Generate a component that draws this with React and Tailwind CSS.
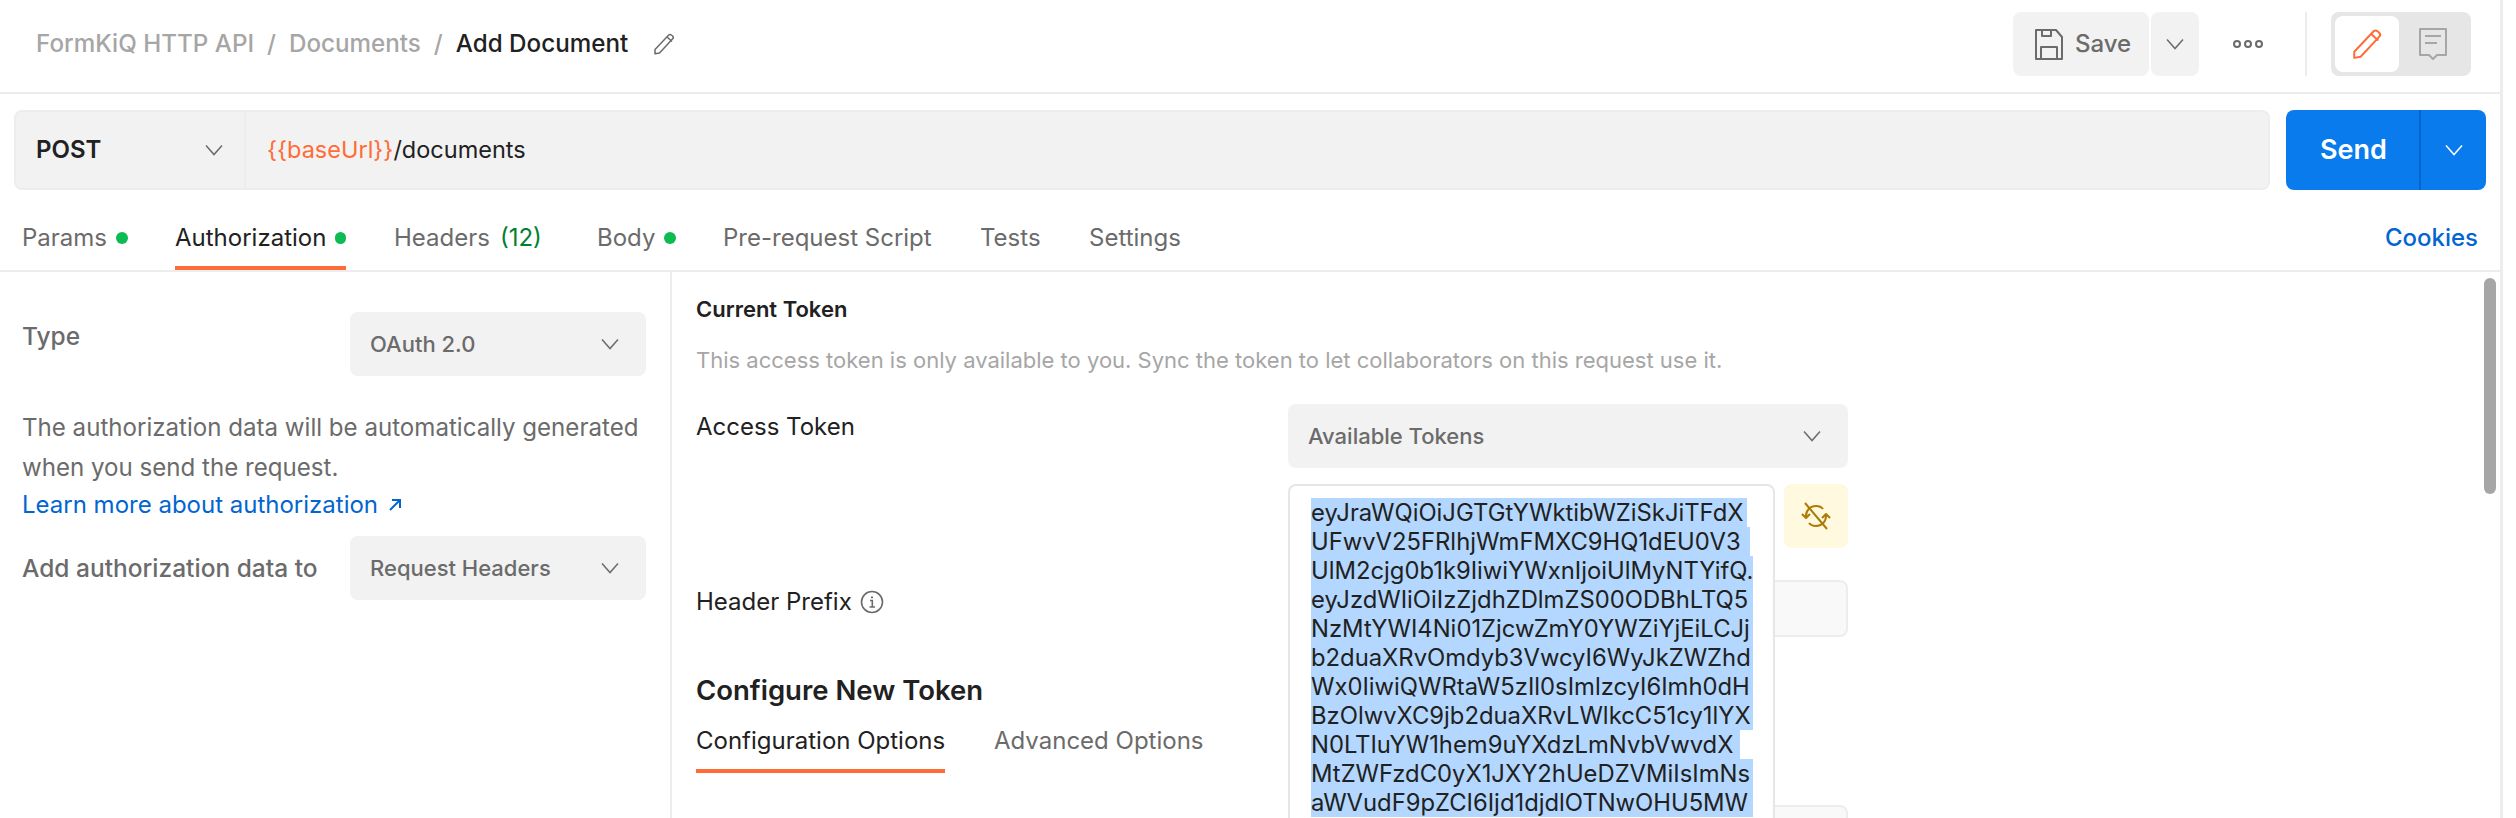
import React from 'react';

const tokenLines = [
  ['eyJraWQiOiJGTGtYWktibWZiSkJiTFdX', 'w-[436px]'],
  ['UFwvV25FRlhjWmFMXC9HQ1dEU0V3', 'w-[439px]'],
  ['UlM2cjg0b1k9IiwiYWxnIjoiUlMyNTYifQ.', 'w-[442px]'],
  ['eyJzdWIiOiIzZjdhZDlmZS00ODBhLTQ5', 'w-[442px]'],
  ['NzMtYWI4Ni01ZjcwZmY0YWZiYjEiLCJj', 'w-[442px]'],
  ['b2duaXRvOmdyb3VwcyI6WyJkZWZhd', 'w-[442px]'],
  ['Wx0IiwiQWRtaW5zIl0sImlzcyI6Imh0dH', 'w-[442px]'],
  ['BzOlwvXC9jb2duaXRvLWlkcC51cy1lYX', 'w-[442px]'],
  ['N0LTIuYW1hem9uYXdzLmNvbVwvdX', 'w-[429px]'],
  ['MtZWFzdC0yX1JXY2hUeDZVMiIsImNs', 'w-[442px]'],
  ['aWVudF9pZCI6Ijd1djdlOTNwOHU5MW', 'w-[442px]'],
];

const Chevron = ({ className = 'text-[#6b6b6b]' }) => (
  <svg width="20" height="20" viewBox="0 0 20 20" fill="none" stroke="currentColor" strokeWidth="1.5" className={className}>
    <path d="M2 5.500l8 9 8-9" />
  </svg>
);

const Pencil = ({ size = 24, color = '#6b6b6b', sw = 1.5 }) => (
  <svg width={size} height={size} viewBox="0 0 24 24" fill="none" stroke={color} strokeWidth={sw} strokeLinejoin="round">
    <path d="M3 17.5L16.5 3.2c.8-.8 2-.9 2.9-.2l1.2 1c.8.8.9 2 .1 2.8L7.5 21 3 21.8z" />
    <path d="M15 5l5 4.5" />
  </svg>
);

const SaveIcon = () => (
  <svg width="28" height="32" viewBox="0 0 28 32" fill="none" stroke="#6b6b6b" strokeWidth="2" strokeLinejoin="round">
    <path d="M1 2h20l6 7v22H1z" />
    <path d="M7 2v6h9V2M6 31V19h16v12" />
  </svg>
);

const CommentIcon = () => (
  <svg width="30" height="34" viewBox="0 0 30 34" fill="none" stroke="#a6a6a6" strokeWidth="2" strokeLinejoin="round">
    <path d="M2 2h26v26H19l-4 4-4-4H2z" />
    <path d="M7 9h16M7 16h12" />
  </svg>
);

const SyncOff = () => (
  <svg width="32" height="32" viewBox="0 0 32 32" fill="none" stroke="#ad7a03" strokeWidth="2" strokeLinejoin="round">
    <path d="M5 3l22 26" />
    <path d="M6 16c0-6 4.500-10 10-10 3 0 5.500 1 7 3" />
    <path d="M26 16c0 6-4.500 10-10 10-3 0-5.500-1-7-3" />
    <path d="M2 14l4 4 4-4M22 18l4-4 4 4" />
  </svg>
);

const InfoIcon = () => (
  <svg width="24" height="24" viewBox="0 0 24 24" fill="none" stroke="#6b6b6b" strokeWidth="1.6">
    <circle cx="12" cy="12" r="10.500" />
    <path d="M10 10.500h2.300V17M9.500 17h5.500" />
    <path d="M12 6.500v1.800" strokeWidth="2" />
  </svg>
);

const Dot = () => <span className="ml-[9px] h-[12px] w-[12px] rounded-full bg-[#0cbb52]" />;

const Select = ({ label, className }) => (
  <div className={`flex h-[64px] items-center justify-between rounded-[8px] bg-[#f2f2f2] pl-[20px] pr-[26px] text-[22px] font-medium text-[#6b6b6b] ${className}`}>
    {label}
    <Chevron />
  </div>
);

const Tab = ({ active, className = '', children }) => (
  <div className={`flex h-full items-center whitespace-nowrap border-b-4 text-[24px] ${active ? 'border-[#ff6c37] text-[#212121]' : 'border-transparent text-[#6b6b6b]'} ${className}`}>
    {children}
  </div>
);

export default function App() {
  return (
    <div className="flex h-[818px] w-[2516px] overflow-hidden bg-white font-['Inter',sans-serif] text-[#212121]">
      <div className="flex w-[2503px] shrink-0 flex-col border-r-[3px] border-[#ededed]">
        {/* title bar */}
        <div className="flex h-[94px] shrink-0 items-center justify-between border-b-2 border-[#ededed] pb-[4px] pl-[36px] pr-[29px]">
          <div className="flex items-center text-[24.2px] font-medium text-[#a6a6a6]">
            <span>FormKiQ HTTP API</span>
            <span className="mx-[13px]">/</span>
            <span>Documents</span>
            <span className="mx-[13px]">/</span>
            <span className="text-[#212121]">Add Document</span>
            <span className="ml-[24px] flex"><Pencil /></span>
          </div>
          <div className="flex h-[64px] items-center">
            <div className="flex h-full w-[136px] items-center gap-[12px] rounded-[8px] bg-[#f2f2f2] pl-[22px] text-[24px] font-medium text-[#6b6b6b]">
              <SaveIcon />
              Save
            </div>
            <div className="ml-[2px] flex h-full w-[48px] items-center justify-center rounded-[8px] bg-[#f2f2f2]">
              <Chevron />
            </div>
            <div className="ml-[34px] flex gap-[3px]">
              <span className="h-[8px] w-[8px] rounded-full border-2 border-[#6b6b6b]" />
              <span className="h-[8px] w-[8px] rounded-full border-2 border-[#6b6b6b]" />
              <span className="h-[8px] w-[8px] rounded-full border-2 border-[#6b6b6b]" />
            </div>
            <div className="ml-[42px] h-full w-[2px] bg-[#ededed]" />
            <div className="ml-[24px] flex h-full w-[140px] items-center rounded-[8px] bg-[#e6e6e6] p-[4px]">
              <div className="flex h-[56px] w-[64px] items-center justify-center rounded-[8px] bg-white">
                <Pencil size={34} color="#ff6c37" sw={1.4} />
              </div>
              <div className="flex flex-1 items-center justify-center">
                <CommentIcon />
              </div>
            </div>
          </div>
        </div>

        {/* url bar */}
        <div className="mt-[16px] flex h-[80px] shrink-0 pl-[14px] pr-[14px]">
          <div className="flex flex-1 rounded-[8px] border-2 border-[#ededed] bg-[#f2f2f2]">
            <div className="flex w-[230px] items-center justify-between border-r-2 border-[#ededed] pl-[20px] pr-[20px] text-[24px] font-semibold">
              POST
              <Chevron />
            </div>
            <div className="flex items-center pl-[21px] text-[23.5px]">
              <span className="text-[#ff6c37]">{'{{baseUrl}}'}</span>
              <span>/documents</span>
            </div>
          </div>
          <div className="ml-[16px] flex w-[200px] rounded-[8px] bg-[#097bed] text-white">
            <div className="flex w-[135px] items-center justify-center border-r-2 border-[#0265d2] pl-[2px] text-[27px] font-semibold">Send</div>
            <div className="flex flex-1 items-center justify-center"><Chevron className="text-white" /></div>
          </div>
        </div>

        {/* request tabs */}
        <div className="flex h-[82px] shrink-0 items-stretch justify-between border-b-2 border-[#ededed] pl-[22px] pr-[22px]">
          <div className="flex h-[80px]">
            <Tab className="w-[153px] pt-[20px]">Params<Dot /></Tab>
            <Tab active className="w-[171px] pt-[20px]">Authorization<Dot /></Tab>
            <Tab className="ml-[48px] w-[203px] pt-[20px]">Headers<span className="ml-[10px] text-[#007f31]">(12)</span></Tab>
            <Tab className="w-[126px] pt-[20px]">Body<Dot /></Tab>
            <Tab className="w-[257px] pt-[20px]">Pre-request Script</Tab>
            <Tab className="w-[109px] pt-[20px]">Tests</Tab>
            <Tab className="pt-[20px] text-[24.5px]">Settings</Tab>
          </div>
          <div className="flex h-[80px] items-center pt-[16px] text-[24px] font-medium text-[#0265d2]">Cookies</div>
        </div>

        <div className="flex min-h-0 flex-1">
          {/* auth sidebar */}
          <div className="w-[672px] shrink-0 border-r-2 border-[#ededed] pl-[22px] pr-[24px] pt-[40px]">
            <div className="flex items-start justify-between">
              <div className="mt-[8px] text-[24.5px] font-medium leading-[32px] text-[#6b6b6b]">Type</div>
              <Select label="OAuth 2.0" className="w-[296px]" />
            </div>
            <p className="mt-[32px] text-[24.1px] leading-[40px] text-[#6b6b6b]">
              The authorization data will be automatically generated when you send the request.
            </p>
            <div className="mt-[2px] flex items-center gap-[10px] text-[24px] leading-[30px] text-[#0265d2]">
              Learn more about authorization
              <svg width="14" height="14" viewBox="0 0 14 14" fill="none" stroke="currentColor" strokeWidth="2"><path d="M2 12L12 2M4 2h8v8" /></svg>
            </div>
            <div className="mt-[16px] flex items-center justify-between">
              <div className="text-[24.5px] font-medium text-[#6b6b6b]">Add authorization data to</div>
              <Select label="Request Headers" className="w-[296px]" />
            </div>
          </div>

          {/* token config */}
          <div className="relative min-w-0 flex-1 pl-[24px] pt-[22px]">
            <div className="text-[22px] font-semibold leading-[30px]">Current Token</div>
            <div className="mt-[21px] text-[22px] leading-[30px] text-[#a6a6a6]">
              This access token is only available to you. Sync the token to let collaborators on this request use it.
            </div>
            <div className="mt-[29px] flex w-[1152px] items-start justify-between">
              <div className="mt-[7px] text-[24px] leading-[32px]">Access Token</div>
              <Select label="Available Tokens" className="w-[560px]" />
            </div>
            <div className="mt-[112px] flex w-[1152px] items-start justify-between">
              <div className="mt-[6px] flex items-center gap-[8px] text-[24px] leading-[32px]">
                Header Prefix
                <InfoIcon />
              </div>
              <div className="h-[57px] w-[560px] rounded-[8px] border-2 border-[#ededed] bg-[#f9f9f9]" />
            </div>
            <div className="mt-[36px] text-[27.5px] font-semibold leading-[34px]">Configure New Token</div>
            <div className="mt-[4px] flex h-[62px] text-[24px]">
              <Tab active className="w-[249px] pt-[2px]">Configuration Options</Tab>
              <Tab className="ml-[49px] pt-[2px]">Advanced Options</Tab>
            </div>
            <div className="ml-[592px] mt-[32px] h-[57px] w-[560px] rounded-[8px] border-2 border-[#ededed] bg-[#f9f9f9]" />

            {/* expanded token overlay */}
            <div className="absolute left-[616px] top-[212px] h-[400px] w-[487px] rounded-[8px] border-2 border-[#e6e6e6] bg-white pl-[21px] pt-[12px] text-[23.8px] leading-[29px]">
              {tokenLines.map(([line, width]) => (
                <div key={line} className={`${width} whitespace-nowrap bg-[#b3d7ff]`}>{line}</div>
              ))}
            </div>
            <div className="absolute left-[1112px] top-[212px] flex h-[64px] w-[64px] items-center justify-center rounded-[8px] bg-[#fff9e0]">
              <SyncOff />
            </div>

            {/* scrollbar */}
            <div className="absolute right-[4px] top-[6px] h-[216px] w-[12px] rounded-full bg-[#a6a6a6]" />
          </div>
        </div>
      </div>
    </div>
  );
}
